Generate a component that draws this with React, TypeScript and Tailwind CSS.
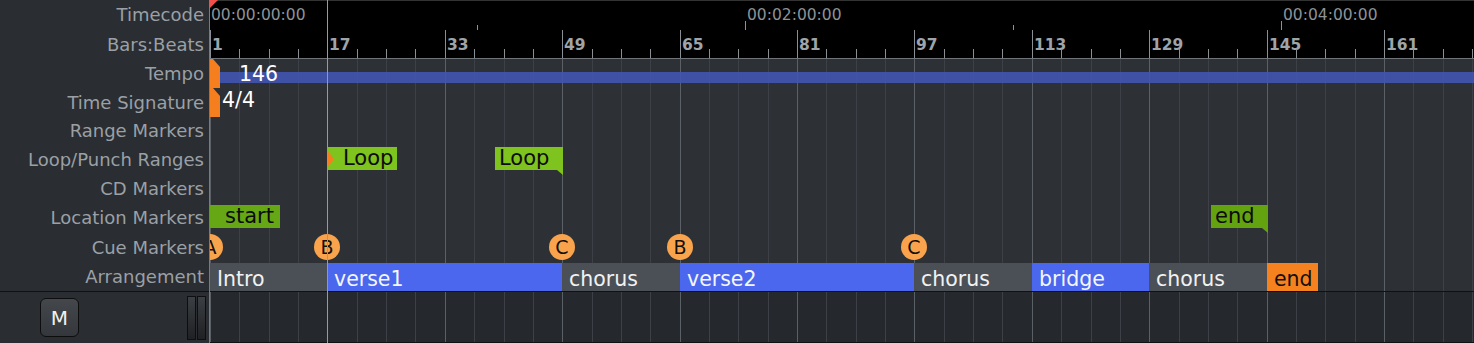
import React from "react";

const PX = 7.3375; // pixels per bar
const bx = (bar: number) => Math.round(1 + (bar - 1) * PX); // x inside the timeline column

const labels = [
  { text: "Timecode", h: "h-[29px]" },
  { text: "Bars:Beats", h: "h-[30px]" },
  { text: "Tempo", h: "h-[29px]" },
  { text: "Time Signature", h: "h-[28px]" },
  { text: "Range Markers", h: "h-[29px]" },
  { text: "Loop/Punch Ranges", h: "h-[29px]" },
  { text: "CD Markers", h: "h-[29px]" },
  { text: "Location Markers", h: "h-[29px]" },
  { text: "Cue Markers", h: "h-[30px]" },
  { text: "Arrangement", h: "h-[29px]" },
];

const gridBars: number[] = [];
for (let b = 1; b <= 177; b += 4) gridBars.push(b);

const barNumbers = [1, 17, 33, 49, 65, 81, 97, 113, 129, 145, 161];

const cues = [
  { bar: 1, l: "A" },
  { bar: 17, l: "B" },
  { bar: 49, l: "C" },
  { bar: 65, l: "B" },
  { bar: 97, l: "C" },
];

const sections = [
  { name: "Intro", from: 1, to: 17, kind: "gray" },
  { name: "verse1", from: 17, to: 49, kind: "blue" },
  { name: "chorus", from: 49, to: 65, kind: "gray" },
  { name: "verse2", from: 65, to: 97, kind: "blue" },
  { name: "chorus", from: 97, to: 113, kind: "gray" },
  { name: "bridge", from: 113, to: 129, kind: "blue" },
  { name: "chorus", from: 129, to: 145, kind: "gray" },
  { name: "end", from: 145, to: 152, kind: "end" },
];

const sectionClass: Record<string, string> = {
  gray: "bg-[#4b5056] text-[#f2f2f2]",
  blue: "bg-[#4b67ed] text-[#f4f6ff]",
  end: "bg-[#f5821f] text-[#111]",
};

function Grid() {
  return (
    <>
      {gridBars.map((b) => (
        <div
          key={b}
          className={
            "absolute top-0 bottom-0 w-px " +
            ((b - 1) % 16 === 0 ? "bg-[#5b6066]" : "bg-[#3d4147]")
          }
          style={{ left: bx(b) }}
        />
      ))}
    </>
  );
}

function Ruler() {
  const minor = gridBars.filter((b) => (b - 1) % 16 !== 0);
  return (
    <div className="relative h-[59px] bg-black border-t border-[#333] border-b border-b-[#6f7479]">
      {/* timecode */}
      {[
        { x: 1, t: "00:00:00:00" },
        { x: 537, t: "00:02:00:00" },
        { x: 1073, t: "00:04:00:00" },
      ].map((tc) => (
        <span
          key={tc.t}
          className="absolute top-[4px] text-[15.5px] leading-[20px] text-[#8d9297]"
          style={{ left: tc.x + 1 }}
        >
          {tc.t}
        </span>
      ))}
      {[536, 1072].map((x) => (
        <div key={x} className="absolute top-[20px] h-[9px] w-px bg-[#8d9297]" style={{ left: x }} />
      ))}
      {[268, 804].map((x) => (
        <div key={x} className="absolute top-[24px] h-[5px] w-px bg-[#8d9297]" style={{ left: x }} />
      ))}

      {/* bars:beats */}
      {barNumbers.map((b) => (
        <React.Fragment key={b}>
          <div className="absolute top-[29px] bottom-0 w-px bg-[#8a8f94]" style={{ left: bx(b) }} />
          <span
            className="absolute top-[34px] text-[15.5px] leading-[20px] font-bold text-[#9fa4a9]"
            style={{ left: bx(b) + 2 }}
          >
            {b}
          </span>
        </React.Fragment>
      ))}
      {minor.map((b) => (
        <div key={b} className="absolute top-[48px] bottom-0 w-px bg-[#8a8f94]" style={{ left: bx(b) }} />
      ))}
    </div>
  );
}

function MeterMark() {
  return (
    <svg width="11" height="29" className="absolute left-[1px] top-0">
      <polygon points="0,0 3,0 10,8 10,29 0,29" fill="#f57f1f" />
    </svg>
  );
}

function Flag({
  left,
  width,
  text,
  fill,
  end,
}: {
  left: number;
  width: number;
  text: string;
  fill: string;
  end?: boolean;
}) {
  return (
    <div className="absolute top-[2px] h-[23px]" style={{ left, width }}>
      <div
        className={"h-full text-[21px] leading-[22px] text-[#0c0c0c] " + (end ? "pl-[4px]" : "pl-[15px]")}
        style={{ background: fill }}
      >
        {text}
      </div>
      {end && (
        <svg width="6" height="5" className="absolute right-0 top-[23px]">
          <polygon points="0,0 6,0 6,5" fill={fill} />
        </svg>
      )}
    </div>
  );
}

function Timeline() {
  return (
    <div className="relative flex-1 flex flex-col overflow-hidden">
      <Ruler />
      <div className="relative flex-1 bg-[#2d3136]">
        <Grid />
        <div className="relative flex flex-col">
          {/* tempo */}
          <div className="relative h-[29px]">
            <div className="absolute left-[11px] right-0 top-[13px] h-[11px] bg-[#4055b0]/90" />
            <span className="absolute left-[30px] top-[3px] text-[20.5px] leading-[24px] text-white">
              146
            </span>
            <MeterMark />
          </div>
          {/* time signature */}
          <div className="relative h-[28px]">
            <MeterMark />
            <span className="absolute left-[13px] top-[0px] text-[20.5px] leading-[24px] text-white">
              4/4
            </span>
          </div>
          {/* range markers */}
          <div className="h-[29px]" />
          {/* loop/punch */}
          <div className="relative h-[29px]">
            <Flag left={119} width={69} text="Loop" fill="#7ec31e" />
            <svg width="8" height="18" className="absolute left-[118px] top-[5px]">
              <polygon points="0,0 7,9 0,18" fill="#f57f1f" />
            </svg>
            <Flag left={286} width={68} text="Loop" fill="#7ec31e" end />
          </div>
          {/* cd */}
          <div className="h-[29px]" />
          {/* location */}
          <div className="relative h-[29px]">
            <Flag left={1} width={70} text="start" fill="#66a716" />
            <Flag left={1002} width={57} text="end" fill="#62a30f" end />
          </div>
          {/* cue */}
          <div className="relative h-[30px]">
            {cues.map((c, i) => (
              <div
                key={i}
                className="absolute top-[2px] w-[26px] h-[26px] rounded-full bg-[#f9a44d] flex items-center justify-center text-[19px] leading-none text-[#111]"
                style={{ left: bx(c.bar) - 13 }}
              >
                {c.l}
              </div>
            ))}
          </div>
          {/* arrangement */}
          <div className="flex h-[29px] pt-[1px]" style={{ paddingLeft: bx(1) }}>
            {sections.map((s, i) => (
              <div
                key={i}
                className={
                  "h-[28px] pl-[7px] text-[20.5px] leading-[33px] whitespace-nowrap overflow-hidden " +
                  sectionClass[s.kind]
                }
                style={{ width: bx(s.to) - bx(s.from) }}
              >
                {s.name}
              </div>
            ))}
          </div>
        </div>
      </div>
    </div>
  );
}

export default function App() {
  return (
    <div className="relative w-[1474px] h-[343px] overflow-hidden bg-[#2a2d31] font-['DejaVu_Sans',sans-serif] select-none">
      <div className="flex h-[291px]">
        <div className="w-[209px] flex flex-col pr-[5px] text-[18px] text-[#9aa0a6]">
          {labels.map((l) => (
            <div key={l.text} className={"flex items-center justify-end whitespace-nowrap " + l.h}>
              {l.text}
            </div>
          ))}
        </div>
        <Timeline />
      </div>

      {/* track */}
      <div className="flex h-[52px] border-t border-[#111]">
        <div className="w-[209px] flex items-center">
          <div className="ml-[40px] w-[39px] h-[39px] rounded-[6px] border border-[#0d0d0d] bg-gradient-to-b from-[#44474c] to-[#34373b] flex items-center justify-center text-[20px] text-[#f0f0f0]">
            M
          </div>
          <div className="ml-auto mr-[3px] flex gap-[1px] h-[44px]">
            <div className="w-[9px] border border-[#0e0e0e] bg-gradient-to-b from-[#3c3f43] to-[#1f2124]" />
            <div className="w-[9px] border border-[#0e0e0e] bg-gradient-to-b from-[#3c3f43] to-[#1f2124]" />
          </div>
        </div>
        <div className="relative flex-1 bg-[#25282c] border-b border-[#111] overflow-hidden">
          <Grid />
        </div>
      </div>

      {/* playhead + loop start line */}
      <div className="absolute left-[209px] top-0 bottom-0 w-px bg-[#e0514a]" />
      <svg width="10" height="10" className="absolute left-[209px] top-0">
        <polygon points="0,0 9,0 0,9" fill="#f2504a" />
      </svg>
      <div className="absolute left-[327px] top-0 bottom-0 w-px bg-[#ec8530]" />
    </div>
  );
}
